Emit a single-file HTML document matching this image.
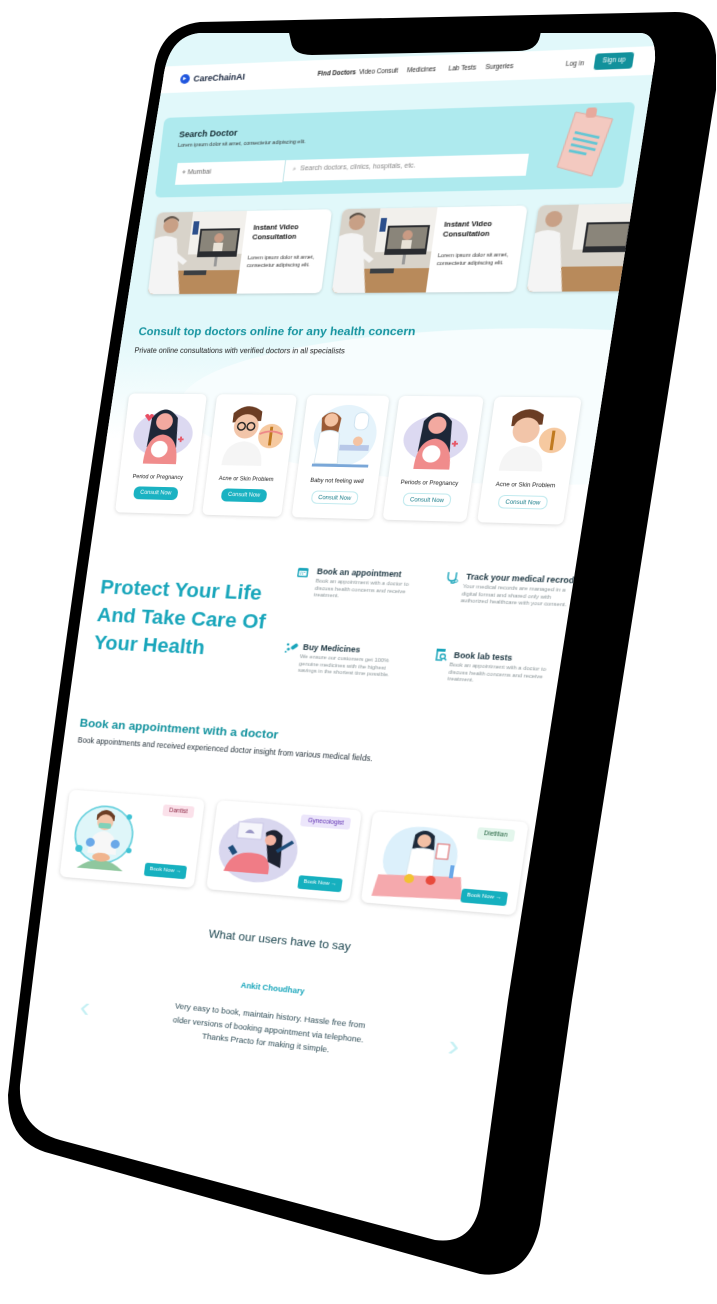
<!DOCTYPE html>
<html><head><meta charset="utf-8">
<style>
*{margin:0;padding:0;box-sizing:border-box}
html,body{width:717px;height:1304px;background:#fff;overflow:hidden;font-family:"Liberation Sans",sans-serif}
#phone{position:absolute;left:0;top:0}
#wrap{position:absolute;left:0;top:0;width:717px;height:1304px;background:#fff;
clip-path:path('M 200 33 L 640 33 Q 656 33 655 60 L 508 1000 L 480 1205 Q 472 1245 435 1240 L 60 1140 Q 18 1128 20 1085 Q 80 580 163 80 Q 168 36 200 33 Z')}
#c{position:absolute;left:0;top:0;width:480px;height:1240px;transform-origin:0 0;
transform:matrix3d(0.913706,-0.048659,0,-0.00014488,-0.105889,0.963868,0,0.00005892,0,0,1,0,167.62,45.35,0,1)}
#c div,#c span,#c svg{position:absolute}
.t{white-space:nowrap}
.vc{top:176px;width:183px;height:87px;background:#fff;border-radius:6px;box-shadow:0 1px 3px rgba(0,0,0,.18);overflow:hidden}
.vc .h{left:104px;top:13px;font-size:7.5px;font-weight:bold;color:#111;line-height:10px}
.vc .p{left:102px;top:46px;font-size:5.6px;color:#333;line-height:8px}
.sc{top:370px;width:84px;height:130px;background:#fff;border-radius:6px;box-shadow:0 1px 4px rgba(0,0,0,.15)}
.sc .l{left:0;width:84px;top:88px;text-align:center;font-size:6px;color:#222}
.sc .b{left:18px;top:101px;width:48px;height:14px;border-radius:6px;font-size:6px;text-align:center;line-height:14px}
.f{background:#1ab2c2;color:#fff}
.o{background:#fff;color:#167b88;border:1px solid #bfe9ee}
.ft{font-size:8.5px;font-weight:bold;color:#1b3540}
.fd{font-size:5.8px;color:#8a9598;line-height:7.5px}
.bc{top:812px;height:100px;background:#fff;border-radius:7px;box-shadow:0 1px 4px rgba(0,0,0,.16);overflow:hidden}
.tag{top:9px;height:13px;border-radius:3px;font-size:6.5px;line-height:13px;padding:0 7px}
.bn{bottom:9px;right:10px;height:15px;width:46px;border-radius:3px;background:#16b0bf;color:#fff;font-size:6px;line-height:15px;text-align:center}
</style></head><body>
<svg id="phone" width="717" height="1304">
<path d="M 200 22 L 675 12 Q 712 12 716 55 L 716 90 L 572 1000 L 540 1225 Q 528 1280 480 1274 L 45 1152 Q 8 1140 8 1095 Q 68 580 154 70 Q 160 27 200 22 Z" fill="#000"/>
</svg>
<div id="wrap">
<div id="c">
<div style="left:-80px;top:-80px;width:640px;height:390px;background:#e1f8fa"></div>
<div style="left:-80px;top:300px;width:640px;height:120px;background:linear-gradient(#e1f8fa,#fff)"></div>
<div style="left:60px;top:300px;width:700px;height:160px;border-radius:50%;background:#f7fdfe"></div>
<div style="left:-80px;top:22px;width:640px;height:28px;background:#fff"></div>
<div style="left:18px;top:31px;width:10px;height:10px;border-radius:50%;background:#1f55dd"></div>
<span class="t" style="left:21px;top:32px;font-size:6px;color:#fff;font-weight:bold;line-height:8px">▸</span>
<span class="t" style="left:32px;top:31px;font-size:9px;font-weight:bold;color:#13213a">CareChainAI</span>
<span class="t" style="left:161px;top:33px;font-size:6.3px;font-weight:bold;color:#222">Find Doctors</span>
<span class="t" style="left:203px;top:33px;font-size:6.3px;color:#222">Video Consult</span>
<span class="t" style="left:251px;top:33px;font-size:6.3px;color:#222">Medicines</span>
<span class="t" style="left:292px;top:33px;font-size:6.3px;color:#222">Lab Tests</span>
<span class="t" style="left:328px;top:33px;font-size:6.3px;color:#222">Surgeries</span>
<span class="t" style="left:405px;top:33px;font-size:6.3px;color:#333">Log in</span>
<div style="left:432px;top:27px;width:36px;height:16px;border-radius:3px;background:#12919c;color:#fff;font-size:6.3px;text-align:center;line-height:16px">Sign up</div>

<div style="left:6px;top:76px;width:470px;height:84px;border-radius:6px;background:#aeeaee"></div>
<span class="t" style="left:24px;top:89px;font-size:9px;font-weight:bold;color:#10252c">Search Doctor</span>
<span class="t" style="left:24px;top:103px;font-size:5.5px;color:#333">Lorem ipsum dolor sit amet, consectetur adipiscing elit.</span>
<div style="left:26px;top:124px;width:114px;height:23px;background:#fff;border-right:1px solid #bfe4e8"></div>
<span class="t" style="left:32px;top:131px;font-size:7px;color:#666">⌖ Mumbai</span>
<div style="left:140px;top:124px;width:242px;height:22px;background:#fff"></div>
<span class="t" style="left:148px;top:130px;font-size:7px;color:#888">⌕ &nbsp;Search doctors, clinics, hospitals, etc.</span>
<svg style="left:405px;top:72px" width="60" height="80" viewBox="0 0 60 80"><path d="M16 12 L52 20 L40 76 L6 66 Z" fill="#f3c9c0" stroke="#e0aea4"/><rect x="26" y="8" width="10" height="10" rx="3" fill="#e7a99d"/><path d="M18 32 L42 38 M17 38 L41 44 M16 44 L40 50 M15 50 L32 54" stroke="#5fc6d4" stroke-width="2.5"/></svg>

<div class="vc" style="left:11px"><svg style="left:0;top:0" width="95" height="87" viewBox="0 0 95 87"><rect width="95" height="87" fill="#d8d3ca"/><rect x="38" y="0" width="57" height="45" fill="#f2f0ec"/><rect x="40" y="10" width="6" height="14" fill="#2c4f8c"/><rect x="0" y="62" width="95" height="25" fill="#b88a5b"/><rect x="48" y="18" width="42" height="30" fill="#2a2c30"/><rect x="50" y="20" width="38" height="22" fill="#8a857a"/><circle cx="69" cy="28" r="5" fill="#c99b84"/><rect x="64" y="33" width="10" height="9" fill="#e8e2d7"/><rect x="67" y="48" width="3" height="10" fill="#999"/><circle cx="16" cy="14" r="8" fill="#c8a086"/><path d="M8 11 Q16 2 24 10 L24 8 Q16 0 8 8 Z" fill="#5d5248"/><path d="M0 28 Q12 22 24 28 L34 87 L0 87 Z" fill="#f4f4f4"/><path d="M22 40 L38 52 L34 56 L20 46 Z" fill="#f4f4f4"/><rect x="36" y="62" width="24" height="5" fill="#3b3f43"/></svg>
<span class="h">Instant Video<br>Consultation</span><span class="p">Lorem ipsum dolor sit amet,<br>consectetur adipiscing elit.</span></div>
<div class="vc" style="left:205px"><svg style="left:0;top:0" width="95" height="87" viewBox="0 0 95 87"><rect width="95" height="87" fill="#d8d3ca"/><rect x="38" y="0" width="57" height="45" fill="#f2f0ec"/><rect x="40" y="10" width="6" height="14" fill="#2c4f8c"/><rect x="0" y="62" width="95" height="25" fill="#b88a5b"/><rect x="48" y="18" width="42" height="30" fill="#2a2c30"/><rect x="50" y="20" width="38" height="22" fill="#8a857a"/><circle cx="69" cy="28" r="5" fill="#c99b84"/><rect x="64" y="33" width="10" height="9" fill="#e8e2d7"/><rect x="67" y="48" width="3" height="10" fill="#999"/><circle cx="16" cy="14" r="8" fill="#c8a086"/><path d="M8 11 Q16 2 24 10 L24 8 Q16 0 8 8 Z" fill="#5d5248"/><path d="M0 28 Q12 22 24 28 L34 87 L0 87 Z" fill="#f4f4f4"/><path d="M22 40 L38 52 L34 56 L20 46 Z" fill="#f4f4f4"/><rect x="36" y="62" width="24" height="5" fill="#3b3f43"/></svg>
<span class="h">Instant Video<br>Consultation</span><span class="p">Lorem ipsum dolor sit amet,<br>consectetur adipiscing elit.</span></div>
<div class="vc" style="left:399px"><svg style="left:0;top:0" width="95" height="87" viewBox="0 0 95 87"><rect width="95" height="87" fill="#d8d3ca"/><rect x="38" y="0" width="57" height="45" fill="#f2f0ec"/><rect x="0" y="62" width="95" height="25" fill="#b88a5b"/><rect x="48" y="18" width="42" height="30" fill="#2a2c30"/><rect x="50" y="20" width="38" height="22" fill="#8a857a"/><circle cx="16" cy="14" r="8" fill="#c8a086"/><path d="M0 28 Q12 22 24 28 L34 87 L0 87 Z" fill="#f4f4f4"/></svg></div>

<span class="t" style="left:6px;top:296px;font-size:12.2px;font-weight:bold;color:#15939f">Consult top doctors online for any health concern</span>
<span style="left:4px;top:317px;width:230px;font-size:7.8px;color:#222;line-height:14px">Private online consultations with verified doctors in all specialists</span>

<div class="sc" style="left:4px"><svg style="left:6px;top:6px" width="72" height="72" viewBox="0 0 72 72"><ellipse cx="36" cy="38" rx="32" ry="24" fill="#dcd9f1"/><path d="M22 20 Q36 2 50 20 L52 52 L20 52 Z" fill="#1d2738"/><circle cx="36" cy="24" r="9" fill="#f3a9a0"/><path d="M18 70 Q18 40 36 38 Q54 40 54 70 Z" fill="#f08c8c"/><circle cx="34" cy="54" r="9" fill="#fff"/><path d="M56 40 l0 6 m-3 -3 l6 0" stroke="#e65a6a" stroke-width="2"/><path d="M14 18 q3 -4 5 0 q2 -4 5 0 l-5 6 z" fill="#e84e63"/></svg><span class="l">Period or Pregnancy</span><div class="b f">Consult Now</div></div>
<div class="sc" style="left:99px"><svg style="left:6px;top:6px" width="72" height="72" viewBox="0 0 72 72"><path d="M14 14 Q28 0 44 12 L44 22 L14 24 Z" fill="#6b3d24"/><circle cx="29" cy="28" r="13" fill="#f2c5a9"/><circle cx="24" cy="28" r="4" fill="none" stroke="#222" stroke-width="1.5"/><circle cx="34" cy="28" r="4" fill="none" stroke="#222" stroke-width="1.5"/><path d="M8 70 Q8 46 29 44 Q50 46 50 70 Z" fill="#f5f5f5"/><circle cx="56" cy="38" r="13" fill="#f6c9a0"/><path d="M56 28 L56 48" stroke="#c07a20" stroke-width="3"/><path d="M44 36 Q56 30 68 36" stroke="#e88" stroke-width="2" fill="none"/></svg><span class="l">Acne or Skin Problem</span><div class="b f">Consult Now</div></div>
<div class="sc" style="left:194px"><svg style="left:6px;top:6px" width="72" height="72" viewBox="0 0 72 72"><circle cx="38" cy="36" r="32" fill="#e5f3fb"/><rect x="46" y="12" width="14" height="18" rx="6" fill="#fff" stroke="#cfe3f0"/><path d="M12 18 Q22 6 32 18 L30 40 L14 40 Z" fill="#9b5a35"/><circle cx="22" cy="20" r="7" fill="#f4c3a3"/><path d="M10 66 L12 34 Q22 28 32 34 L34 66 Z" fill="#fff" stroke="#d6e6ee"/><rect x="34" y="46" width="30" height="6" fill="#b8c8e8"/><circle cx="52" cy="42" r="5" fill="#f4c3a3"/><path d="M8 68 L66 68" stroke="#7aa7d8" stroke-width="3"/></svg><span class="l">Baby not feeling well</span><div class="b o">Consult Now</div></div>
<div class="sc" style="left:288px"><svg style="left:6px;top:6px" width="72" height="72" viewBox="0 0 72 72"><ellipse cx="36" cy="38" rx="32" ry="24" fill="#dcd9f1"/><path d="M22 20 Q36 2 50 20 L52 52 L20 52 Z" fill="#1d2738"/><circle cx="36" cy="24" r="9" fill="#f3a9a0"/><path d="M18 70 Q18 40 36 38 Q54 40 54 70 Z" fill="#f08c8c"/><circle cx="34" cy="54" r="9" fill="#fff"/><path d="M56 40 l0 6 m-3 -3 l6 0" stroke="#e65a6a" stroke-width="2"/></svg><span class="l">Periods or Pregnancy</span><div class="b o">Consult Now</div></div>
<div class="sc" style="left:383px"><svg style="left:6px;top:6px" width="72" height="72" viewBox="0 0 72 72"><path d="M14 14 Q28 0 44 12 L44 22 L14 24 Z" fill="#6b3d24"/><circle cx="29" cy="28" r="13" fill="#f2c5a9"/><path d="M8 70 Q8 46 29 44 Q50 46 50 70 Z" fill="#f5f5f5"/><circle cx="56" cy="38" r="13" fill="#f6c9a0"/><path d="M56 28 L56 48" stroke="#c07a20" stroke-width="3"/></svg><span class="l">Acne or Skin Problem</span><div class="b o">Consult Now</div></div>

<div style="left:-2px;top:567px;font-size:22px;font-weight:bold;color:#19a6bb;line-height:31px;white-space:nowrap">Protect Your Life<br>And Take Care Of<br>Your Health</div>

<svg style="left:207px;top:552px" width="13" height="13" viewBox="0 0 13 13"><rect x="1" y="2" width="11" height="10" rx="1.5" fill="#1aa5bb"/><rect x="2.5" y="5" width="8" height="5.5" fill="#fff"/><path d="M4 6h1v1H4zM6 6h1v1H6zM8 6h1v1H8zM4 8h1v1H4zM6 8h1v1H6z" fill="#1aa5bb"/></svg>
<span class="t ft" style="left:228px;top:552px">Book an appointment</span>
<span class="fd" style="left:228px;top:565px;width:110px">Book an appointment with a doctor to discuss health concerns and receive treatment.</span>
<svg style="left:360px;top:552px" width="13" height="14" viewBox="0 0 13 14"><path d="M2 1 L2 6 Q2 10 6 10 Q10 10 10 6 L10 1 M6 10 L6 12 Q8 13 10 11" stroke="#1aa5bb" stroke-width="1.4" fill="none"/><circle cx="10.5" cy="10" r="1.5" fill="none" stroke="#1aa5bb"/></svg>
<span class="t ft" style="left:380px;top:552px">Track your medical recrod</span>
<span class="fd" style="left:378px;top:565px;width:110px">Your medical records are managed in a digital format and shared only with authorized healthcare with your consent.</span>
<svg style="left:205px;top:634px" width="14" height="13" viewBox="0 0 14 13"><rect x="6" y="3" width="8" height="4" rx="2" transform="rotate(-40 10 5)" fill="#1aa5bb"/><circle cx="3" cy="3" r="1.3" fill="#1aa5bb"/><circle cx="4" cy="8" r="1.6" fill="#1aa5bb"/><circle cx="1.5" cy="11" r="1" fill="#1aa5bb"/></svg>
<span class="t ft" style="left:224px;top:634px">Buy Medicines</span>
<span class="fd" style="left:222px;top:647px;width:110px">We ensure our customers get 100% genuine medicines with the highest savings in the shortest time possible.</span>
<svg style="left:360px;top:634px" width="13" height="14" viewBox="0 0 13 14"><rect x="1" y="0" width="9" height="3" fill="#1aa5bb"/><path d="M2 3 L2 12 L8 12" stroke="#1aa5bb" stroke-width="1.5" fill="none"/><circle cx="8" cy="8" r="2.5" fill="none" stroke="#1aa5bb" stroke-width="1.3"/><path d="M10 10 L12 12" stroke="#1aa5bb" stroke-width="1.5"/></svg>
<span class="t ft" style="left:379px;top:635px">Book lab tests</span>
<span class="fd" style="left:376px;top:648px;width:110px">Book an appointment with a doctor to discuss health concerns and receive treatment.</span>

<span class="t" style="left:-7px;top:728px;font-size:13px;font-weight:bold;color:#14939f">Book an appointment with a doctor</span>
<span style="left:-7px;top:750px;width:350px;font-size:8.2px;color:#24313a;line-height:11px">Book appointments and received experienced doctor insight from various medical fields.</span>

<div class="bc" style="left:-9px;width:150px"><svg style="left:4px;top:4px" width="80" height="92" viewBox="0 0 80 92"><circle cx="40" cy="44" r="32" fill="#dff6f9" stroke="#6fd3df" stroke-width="2"/><circle cx="14" cy="62" r="4" fill="#3fc2d4"/><circle cx="66" cy="22" r="3" fill="#3fc2d4"/><circle cx="70" cy="60" r="3" fill="#3fc2d4"/><path d="M30 22 Q40 10 50 22 L50 28 L30 28 Z" fill="#6b3d24"/><circle cx="40" cy="30" r="9" fill="#f2c5a9"/><rect x="33" y="31" width="14" height="6" rx="2" fill="#7fd1b9"/><path d="M24 66 Q24 42 40 40 Q56 42 56 66 Z" fill="#f7f7f7"/><circle cx="26" cy="54" r="5" fill="#6aa8e8"/><circle cx="54" cy="54" r="5" fill="#6aa8e8"/><path d="M14 84 Q40 62 66 84 Z" fill="#8fc79e"/><ellipse cx="40" cy="70" rx="10" ry="5" fill="#f0b48e"/></svg><div class="tag" style="right:10px;background:#fbe1ea;color:#8a2340">Dantist</div><div class="bn">Book Now →</div></div>
<div class="bc" style="left:155px;width:153px"><svg style="left:4px;top:12px" width="90" height="80" viewBox="0 0 90 80"><ellipse cx="46" cy="40" rx="42" ry="36" fill="#d9d7ef"/><rect x="22" y="10" width="26" height="18" fill="#f5f5fb" stroke="#c9c6e6"/><path d="M30 22 Q35 14 40 22" fill="#9b98c6"/><path d="M12 66 Q18 40 46 44 Q62 46 60 66 Z" fill="#f07c86"/><path d="M52 20 Q62 12 70 22 L72 58 L58 52 Z" fill="#1d2230"/><circle cx="58" cy="28" r="6" fill="#f4b3a0"/><path d="M66 40 L82 28" stroke="#1e4d7a" stroke-width="4"/><path d="M16 38 L22 46" stroke="#1e4d7a" stroke-width="6"/></svg><div class="tag" style="right:10px;background:#ece6fb;color:#5b2bb0">Gynecologist</div><div class="bn">Book Now →</div></div>
<div class="bc" style="left:320px;width:157px"><svg style="left:6px;top:8px" width="100" height="90" viewBox="0 0 100 90"><path d="M12 30 Q20 0 60 6 Q92 14 84 50 Q76 80 40 70 Q4 64 12 30 Z" fill="#dcf0fb"/><path d="M40 14 Q50 4 60 14 L62 40 L38 40 Z" fill="#1d2a3a"/><circle cx="50" cy="20" r="7" fill="#f2c0a5"/><path d="M36 64 L38 30 Q50 26 62 30 L64 64 Z" fill="#fff" stroke="#d7e8f0"/><rect x="64" y="22" width="12" height="16" fill="#fff" stroke="#e06060"/><path d="M8 60 L92 56 L96 80 L4 84 Z" fill="#f5a9ad"/><circle cx="40" cy="62" r="5" fill="#f2c232"/><circle cx="62" cy="62" r="5" fill="#e84a3c"/><rect x="80" y="44" width="4" height="14" fill="#6aa8e8"/></svg><div class="tag" style="right:12px;background:#e3f6ec;color:#1d5e3a">Dietitian</div><div class="bn">Book Now →</div></div>

<span style="left:0;width:480px;top:955px;text-align:center;font-size:12.5px;color:#1c4650">What our users have to say</span>
<span style="left:0;width:480px;top:1011px;text-align:center;font-size:8.5px;font-weight:bold;color:#19a6bb">Ankit Choudhary</span>
<span class="t" style="left:90px;width:300px;top:1040px;text-align:center;font-size:8.8px;color:#2e4c56;line-height:15.5px">Very easy to book, maintain history. Hassle free from<br>older versions of booking appointment via telephone.<br>Thanks Practo for making it simple.</span>
<span class="t" style="left:32px;top:1042px;font-size:34px;color:#c5f0f4;line-height:34px">‹</span>
<span class="t" style="left:430px;top:1042px;font-size:34px;color:#c5f0f4;line-height:34px">›</span>
</div>
</div>
<svg style="position:absolute;left:0;top:0" width="717" height="80"><path d="M 288 28 L 542 26 L 540 36 Q 537 51 518 51 L 312 55 Q 293 55 291 42 Z" fill="#000"/></svg>
</body></html>
